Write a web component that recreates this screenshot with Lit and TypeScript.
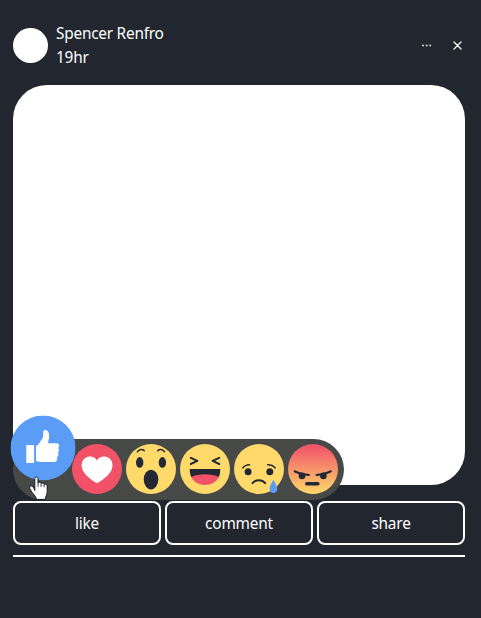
import { LitElement, html, css, svg } from "lit";
import { customElement } from "lit/decorators.js";

const INK = "#242834";

const faces = [
  {
    name: "like",
    art: svg`<circle cx="32.5" cy="32.5" r="32.5" fill="#5b9df6"/>
      <rect x="15.8" y="29.4" width="7.8" height="18.2" rx=".6" fill="#fff"/>
      <path fill="#fff" d="M25.5 30.6C28.6 28.8 29.3 26 31.6 23.4C33.2 21.6 32.5 18.6 32.8 16.3C33 14 36.3 14 37.7 16.6C39.6 20.2 38.2 24 37.5 27.7H46.4C49 28 49.4 31 47.6 32.4C49 33.7 48.8 36 47.4 37.1C48.6 38.5 48 41 46.4 41.7C47.2 43.5 46.4 46.3 44 46.5H30C28 46.5 27 45.6 25.5 45.5Z"/>`,
    box: "0 0 65 65",
  },
  {
    name: "love",
    art: svg`<circle cx="25" cy="25" r="25" fill="#f25268"/>
      <path fill="#fff" d="M25 16.4C22.4 12 17.2 11.8 13.6 13.8C10 16 8.8 20.6 10.3 25C12.4 31 19 35.8 25 39.3C31 35.8 37.8 31 39.9 25C41.4 20.6 40.2 16 36.6 13.8C33 11.8 27.6 12 25 16.4Z"/>`,
    box: "0 0 50 50",
  },
  {
    name: "wow",
    art: svg`<circle cx="25" cy="25" r="25" fill="#ffda6b"/>
      <g fill=${INK}><ellipse cx="13.7" cy="18.4" rx="3.7" ry="5.3"/><ellipse cx="36.4" cy="18.4" rx="3.7" ry="5.3"/>
      <ellipse cx="25" cy="35.6" rx="7.3" ry="9.9"/></g>
      <path fill="none" stroke=${INK} stroke-width="1.5" stroke-linecap="round" d="M11.4 7.8C13 5.2 16.2 4.6 18.2 6.6M31.8 6.6C33.8 4.6 37 5.2 38.6 7.8"/>`,
    box: "0 0 50 50",
  },
  {
    name: "haha",
    art: svg`<circle cx="25" cy="25" r="25" fill="#ffda6b"/>
      <path fill="none" stroke=${INK} stroke-width="2" stroke-linecap="round" stroke-linejoin="round" d="M10.8 13.8L17.4 16.9L10.8 20M39.2 13.8L32.6 16.9L39.2 20"/>
      <path fill=${INK} d="M9.7 25H40.3C40.3 29 39.6 31.4 38.6 33.3H11.4C10.4 31.4 9.7 29 9.7 25Z"/>
      <path fill="#f25268" d="M11.3 33.1C18 29.3 32 29.3 38.7 33.1C36 38.6 31 41 25 41C19 41 14 38.6 11.3 33.1Z"/>`,
    box: "0 0 50 50",
  },
  {
    name: "sad",
    art: svg`<circle cx="25" cy="25" r="25" fill="#ffda6b"/>
      <g fill=${INK}><circle cx="14.1" cy="27.7" r="3.5"/><circle cx="35.8" cy="27.7" r="3.5"/></g>
      <g fill="none" stroke=${INK} stroke-linecap="round"><path stroke-width="1.5" d="M8.8 24C10.4 21.7 12.9 20.8 15.6 20.8M33.6 20.8C36.8 20.8 39.3 21.7 41.2 24"/>
      <path stroke-width="2" d="M18.6 39.2C21.6 35.2 28.2 35.2 31.2 39.2"/></g>
      <path fill="#5b9df6" d="M39.4 35.8C41 39 43.2 41.8 43.2 45C43.2 47.4 41.5 49 39.4 49C37.3 49 35.6 47.4 35.6 45C35.6 41.8 37.8 39 39.4 35.8Z"/>`,
    box: "0 0 50 50",
  },
  {
    name: "angry",
    art: svg`<defs><linearGradient id="rage" x1="0" y1="0" x2="0" y2="1"><stop offset="0" stop-color="#f25268"/><stop offset=".1" stop-color="#f25b69"/><stop offset=".93" stop-color="#fdd06b"/><stop offset="1" stop-color="#ffda6b"/></linearGradient></defs>
      <circle cx="25" cy="25" r="25" fill="url(#rage)"/>
      <g fill=${INK}><circle cx="14" cy="31.9" r="3.3"/><circle cx="35.4" cy="31.9" r="3.3"/><rect x="17" y="38" width="14.6" height="3.4" rx="1.7"/></g>
      <path fill="none" stroke=${INK} stroke-width="2.2" stroke-linecap="round" d="M6.7 27.3C10.5 29.4 15 30.4 20.8 31M42.7 27.3C39 29.4 34.4 30.4 28.6 31"/>`,
    box: "0 0 50 50",
  },
];

@customElement("app-root")
export class AppRoot extends LitElement {
  static styles = css`
    :host {
      display: block;
      box-sizing: border-box;
      height: 618px;
      padding: 22px 16px 0 13px;
      background: #22262f;
      color: #fff;
      font: 15.4px/24px "Noto Sans", "Open Sans", sans-serif;
      overflow: hidden;
    }
    svg { display: block; }
    .head { display: flex; align-items: center; height: 48px; gap: 8px; margin-bottom: 15px; }
    .avatar { width: 35px; height: 35px; border-radius: 50%; background: #fff; margin-top: -1px; }
    .who { flex: 1; }
    .name { letter-spacing: -0.14px; }
    .who { letter-spacing: -0.24px; }
    .who .name { letter-spacing: -0.24px; }
    .tools { display: flex; gap: 15px; margin: -1px -1px 0 0; }
    .media { position: relative; height: 400px; border-radius: 34px; background: #fff; }
    .picker {
      position: absolute; left: 0; top: 354px; box-sizing: border-box;
      width: 331px; height: 61px; padding: 5px 6px 6px 5px;
      border-radius: 31px; background: #474947;
      display: flex; gap: 4px;
    }
    .face { flex: none; width: 50px; height: 50px; }
    .face svg { width: 100%; height: 100%; }
    .face.active { transform: translate(0, -21px) scale(1.3); }
    .pointer { position: absolute; left: 16px; top: 37px; }
    .actions { display: grid; grid-template-columns: repeat(3, 1fr); gap: 4px; margin-top: 16px; }
    .action {
      box-sizing: border-box; height: 44px; padding: 2px 0 0; margin: 0;
      border: 2px solid #fff; border-radius: 8px;
      background: none; color: inherit; font: inherit; letter-spacing: -0.2px;
    }
    .rule { height: 2px; margin-top: 10px; background: #fff; }
  `;

  render() {
    return html`
      <div class="head">
        <div class="avatar"></div>
        <div class="who">
          <div class="name">Spencer Renfro</div>
          <div>19hr</div>
        </div>
        <div class="tools">
          <svg width="16" height="16" viewBox="0 0 16 16" fill="#d8d9da">
            <circle cx="4" cy="7.4" r="1"/><circle cx="7.6" cy="7.4" r="1"/><circle cx="11.2" cy="7.4" r="1"/>
          </svg>
          <svg width="16" height="16" viewBox="0 0 16 16" fill="none" stroke="#fff" stroke-width="1.3" stroke-linecap="round">
            <path d="M4 4L11 11M11 4L4 11"/>
          </svg>
        </div>
      </div>
      <div class="media">
        <div class="picker">
          ${faces.map(
            (f) => html`<div class="face ${f.name === "like" ? "active" : ""}">
              <svg viewBox=${f.box}>${f.art}</svg>
            </div>`
          )}
          <svg class="pointer" width="19" height="25" viewBox="0 0 19 25">
            <path fill="#fff" stroke="#15171f" stroke-width="1" stroke-linejoin="round" d="M5.8 14.5V2.6C5.8 .4 9 .4 9 2.6V6.8C9.8 5.9 11.8 6.2 12 7.4C13 6.6 14.8 7 15.1 8.4C16.4 7.6 18.2 8.3 18.2 10V15.6C18.2 18.6 16.6 20 16.4 23.4H7.6C7 20.4 3.8 17.7 1.8 14.4C0 11.6 .6 10 2 9.8C3.6 9.6 4.8 11.8 5.8 14.5Z"/>
            <path fill="none" stroke="#15171f" stroke-width=".9" d="M9.1 6.8V10.6M12.1 7.6V10.8M15.1 8.6V11.2"/>
          </svg>
        </div>
      </div>
      <div class="actions">
        ${["like", "comment", "share"].map((a) => html`<button class="action">${a}</button>`)}
      </div>
      <div class="rule"></div>
    `;
  }
}
